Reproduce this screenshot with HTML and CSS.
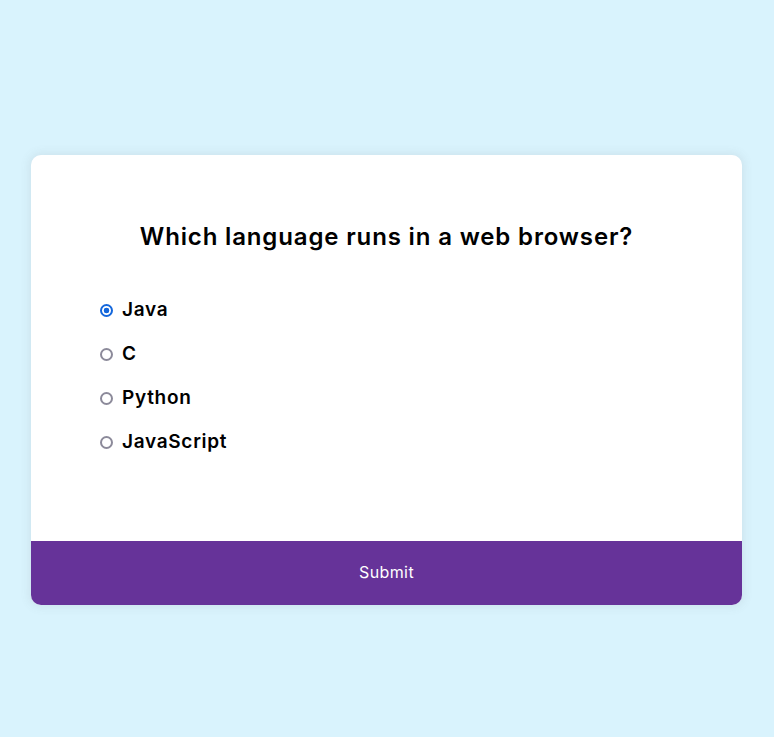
FILE: index.html
```html
<!DOCTYPE html>
<html lang="en">
<head>
<meta charset="utf-8">
<title>Quiz</title>
<link rel="stylesheet" href="styles.css">
</head>
<body>
  <div class="quiz">
    <div class="quiz-header">
      <h2 class="question">Which language runs in a web browser?</h2>
      <ul class="answers">
        <li class="answer"><input class="radio" type="radio" name="answer" id="a" checked> <label for="a">Java</label></li>
        <li class="answer"><input class="radio" type="radio" name="answer" id="b"> <label for="b">C</label></li>
        <li class="answer"><input class="radio" type="radio" name="answer" id="c"> <label for="c">Python</label></li>
        <li class="answer"><input class="radio" type="radio" name="answer" id="d"> <label for="d">JavaScript</label></li>
      </ul>
    </div>
    <button class="submit">Submit</button>
  </div>
</body>
</html>
```
FILE: styles.css
```css
html, body {
  margin: 0;
}
body {
  background: #d9f3fd;
  font-family: Inter, "Open Sans", sans-serif;
  padding: 155px 31px 0;
  height: 737px;
  box-sizing: border-box;
}
.quiz {
  background: #fff;
  border-radius: 10px;
  box-shadow: 0 0 10px 2px rgba(100, 100, 100, 0.1);
  overflow: hidden;
  width: 711px;
}
.quiz-header {
  padding: 64px 64px 85px;
}
.question {
  margin: 0;
  text-align: center;
  font-size: 24px;
  line-height: 36px;
  font-weight: 600;
  letter-spacing: 0.85px;
  color: #000;
}
.answers {
  list-style: none;
  margin: 41px 0 0;
  padding: 0;
  display: flex;
  flex-direction: column;
  gap: 16px;
}
.answer {
  font-size: 19px;
  line-height: 28px;
  font-weight: 600;
  letter-spacing: 0.7px;
  display: flex;
  align-items: center;
}
.radio {
  appearance: none;
  -webkit-appearance: none;
  box-sizing: border-box;
  margin: 1px 3px 0 5px;
  width: 13px;
  height: 13px;
  border: 2px solid #8c8a9a;
  border-radius: 50%;
  background: #fff;
}
.radio:checked {
  border-color: #1467dc;
  background: radial-gradient(circle, #1467dc 0 2.6px, #fff 3.1px);
}
.answer label {
  margin-left: 6px;
}
.submit {
  display: block;
  width: 100%;
  height: 64px;
  border: none;
  background: #663399;
  color: #fff;
  font-family: inherit;
  font-size: 16px;
  letter-spacing: 0.4px;
  padding: 0 0 2px;
}
```
